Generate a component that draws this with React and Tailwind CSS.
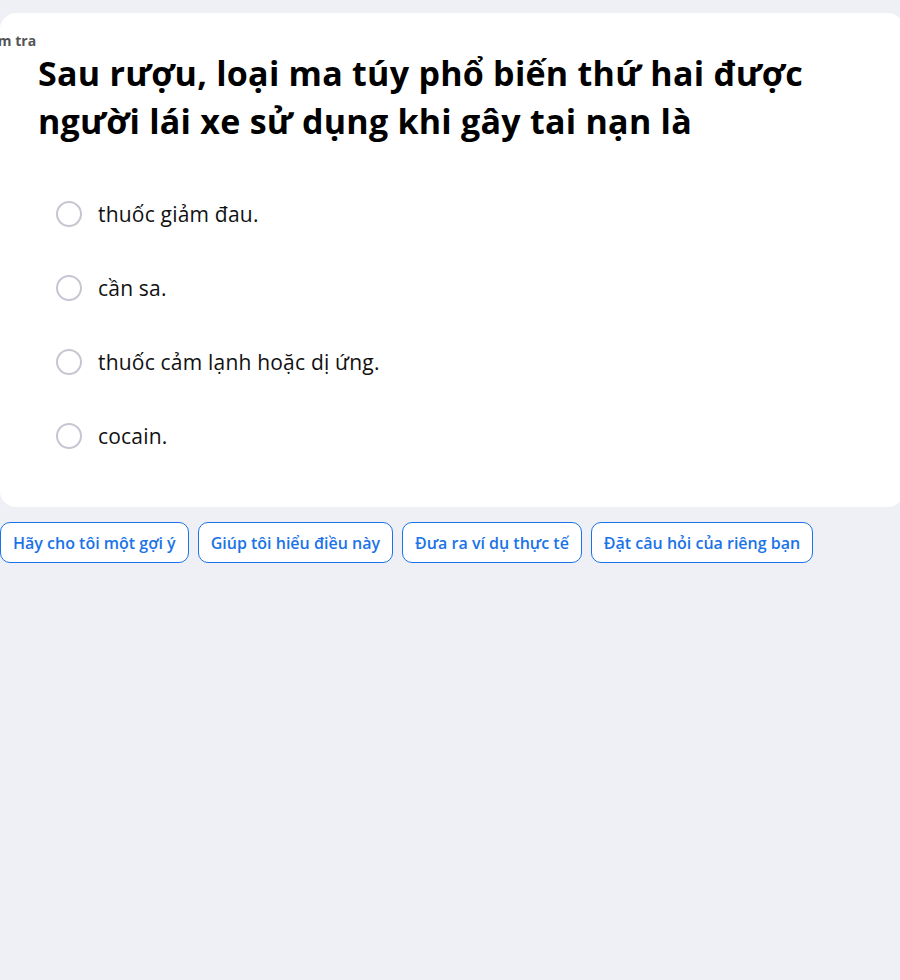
import React from "react";

const options = [
  "thuốc giảm đau.",
  "cần sa.",
  "thuốc cảm lạnh hoặc dị ứng.",
  "cocain.",
];

const buttons = [
  "Hãy cho tôi một gợi ý",
  "Giúp tôi hiểu điều này",
  "Đưa ra ví dụ thực tế",
  "Đặt câu hỏi của riêng bạn",
];

export default function App() {
  return (
    <div
      className="min-h-[980px] w-[900px] overflow-hidden bg-[#eff0f5] pt-[13px]"
      style={{ fontFamily: '"Open Sans", "Noto Sans", sans-serif' }}
    >
      <div className="w-[904px] rounded-2xl bg-white pb-[58px] pt-[20px]">
        <div className="-ml-[24px] text-[14px] font-bold leading-[16px] text-[#555]">
          Kiểm tra
        </div>
        <h1 className="pl-[38px] text-[34px] font-bold leading-[48px] tracking-[0.25px] text-black">
          Sau rượu, loại ma túy phổ biến thứ hai được
          <br />
          người lái xe sử dụng khi gây tai nạn là
        </h1>
        <div className="mt-[56px] flex flex-col gap-[48px] pl-[56px]">
          {options.map((o) => (
            <div key={o} className="flex h-[26px] items-center gap-[16px]">
              <span className="h-[26px] w-[26px] shrink-0 rounded-full border-2 border-[#c6c6d2] bg-white" />
              <span className="text-[21px] leading-[26px] tracking-[0.2px] text-[#111]">{o}</span>
            </div>
          ))}
        </div>
      </div>
      <div className="mt-[15px] flex gap-[9px]">
        {buttons.map((b) => (
          <button
            key={b}
            className="h-[41px] rounded-[10px] border border-[#1a73e8] bg-white px-[12px] text-[16px] font-semibold text-[#1a73e8]"
          >
            {b}
          </button>
        ))}
      </div>
    </div>
  );
}
